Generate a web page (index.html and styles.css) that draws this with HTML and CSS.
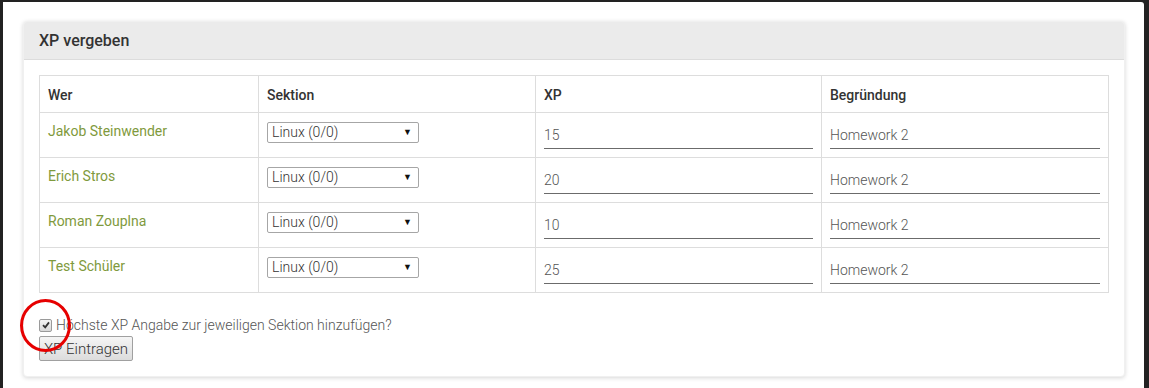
FILE: index.html
```html
<!DOCTYPE html>
<html lang="de">
<head>
<meta charset="utf-8">
<title>XP vergeben</title>
<link rel="stylesheet" href="styles.css">
</head>
<body>
<div class="page">
  <div class="panel">
    <div class="panel-heading">XP vergeben</div>
    <div class="panel-body">
      <table class="xp-table">
        <colgroup>
          <col class="c1"><col class="c2"><col class="c3"><col class="c4">
        </colgroup>
        <thead>
          <tr><th>Wer</th><th>Sektion</th><th>XP</th><th>Begründung</th></tr>
        </thead>
        <tbody>
          <tr>
            <td class="name">Jakob Steinwender</td>
            <td><div class="select">Linux (0/0)<span class="arrow">▼</span></div></td>
            <td><div class="line-input">15</div></td>
            <td><div class="line-input">Homework 2</div></td>
          </tr>
          <tr>
            <td class="name">Erich Stros</td>
            <td><div class="select">Linux (0/0)<span class="arrow">▼</span></div></td>
            <td><div class="line-input">20</div></td>
            <td><div class="line-input">Homework 2</div></td>
          </tr>
          <tr>
            <td class="name">Roman Zouplna</td>
            <td><div class="select">Linux (0/0)<span class="arrow">▼</span></div></td>
            <td><div class="line-input">10</div></td>
            <td><div class="line-input">Homework 2</div></td>
          </tr>
          <tr>
            <td class="name">Test Schüler</td>
            <td><div class="select">Linux (0/0)<span class="arrow">▼</span></div></td>
            <td><div class="line-input">25</div></td>
            <td><div class="line-input">Homework 2</div></td>
          </tr>
        </tbody>
      </table>
      <div class="check-row">
        <span class="checkbox"><svg width="8" height="8" viewBox="0 0 8 8"><path d="M1 4.2 L3.2 6.4 L7 1.4" fill="none" stroke="#333" stroke-width="1.8"/></svg></span>
        <span class="check-label">Höchste XP Angabe zur jeweiligen Sektion hinzufügen?</span>
        <span class="red-circle"></span>
      </div>
      <button class="btn">XP Eintragen</button>
    </div>
  </div>
</div>
</body>
</html>
```

FILE: styles.css
```css
html, body {
  margin: 0;
  padding: 0;
  height: 100%;
}
body {
  background: #222222;
  font-family: Roboto, "Liberation Sans", sans-serif;
  font-size: 14px;
  line-height: 20px;
  color: #333;
  overflow: hidden;
}
.page {
  background: #fff;
  margin: 2px 5px 0 3px;
  height: calc(100% - 2px);
  padding: 19px 19px 0 20px;
  box-sizing: border-box;
  border-top-right-radius: 3px;
}
.panel {
  border: 1px solid #f0f0f0;
  border-radius: 4px;
  background: #fff;
  box-shadow: 0 1px 4px rgba(0,0,0,0.16);
}
.panel-heading {
  background: #ebebeb;
  border-bottom: 1px solid #dcdcdc;
  padding: 9px 15px 8px;
  font-size: 16px;
  font-weight: 500;
  line-height: 20px;
  color: #333;
  border-radius: 3px 3px 0 0;
}
.panel-body {
  padding: 15px;
}
.xp-table {
  width: 100%;
  border-collapse: collapse;
  table-layout: fixed;
  margin-bottom: 21px;
}
.c1 { width: 219px; }
.c2 { width: 277px; }
.c3 { width: 286px; }
.xp-table th,
.xp-table td {
  border: 1px solid #dddddd;
  padding: 8px;
  text-align: left;
  vertical-align: top;
  line-height: 20px;
}
.xp-table th {
  font-weight: 500;
  color: #333;
  padding-top: 9px;
  padding-bottom: 7px;
}
.xp-table td.name {
  color: #7f9a3d;
  padding-top: 8px;
}
.select {
  position: relative;
  width: 152px;
  height: 21px;
  box-sizing: border-box;
  border: 1px solid #a6a6a6;
  border-radius: 2px;
  margin-top: 1px;
  padding: 0 4px;
  line-height: 19px;
  color: #333;
  font-size: 14px;
  font-weight: 300;
  background: #fff;
}
.arrow {
  position: absolute;
  right: 6px;
  top: 0;
  font-size: 9px;
  color: #111;
}
.line-input {
  height: 28px;
  box-sizing: border-box;
  border-bottom: 1px solid #6b6b6b;
  line-height: 26px;
  padding-top: 1px;
  font-weight: 300;
  color: #555;
}
.check-row {
  position: relative;
  display: flex;
  align-items: center;
  height: 22px;
}
.checkbox {
  width: 11px;
  height: 11px;
  border: 1px solid #9a9a9a;
  border-radius: 2px;
  background: linear-gradient(#f4f4f4, #d8d8d8);
  display: flex;
  align-items: center;
  justify-content: center;
  margin-right: 4px;
}
.check-label {
  color: #555;
  font-weight: 300;
}
.red-circle {
  position: absolute;
  left: -19px;
  top: -15px;
  width: 45px;
  height: 47px;
  border: 3px solid #e60000;
  border-radius: 50%;
}
.btn {
  display: block;
  width: 94px;
  height: 25px;
  padding: 0;
  border: 1px solid #a0a0a0;
  border-radius: 2px;
  background: linear-gradient(#f5f5f5, #dcdcdc);
  font-family: Roboto, "Liberation Sans", sans-serif;
  font-size: 15px;
  font-weight: 300;
  color: #333;
}
```
